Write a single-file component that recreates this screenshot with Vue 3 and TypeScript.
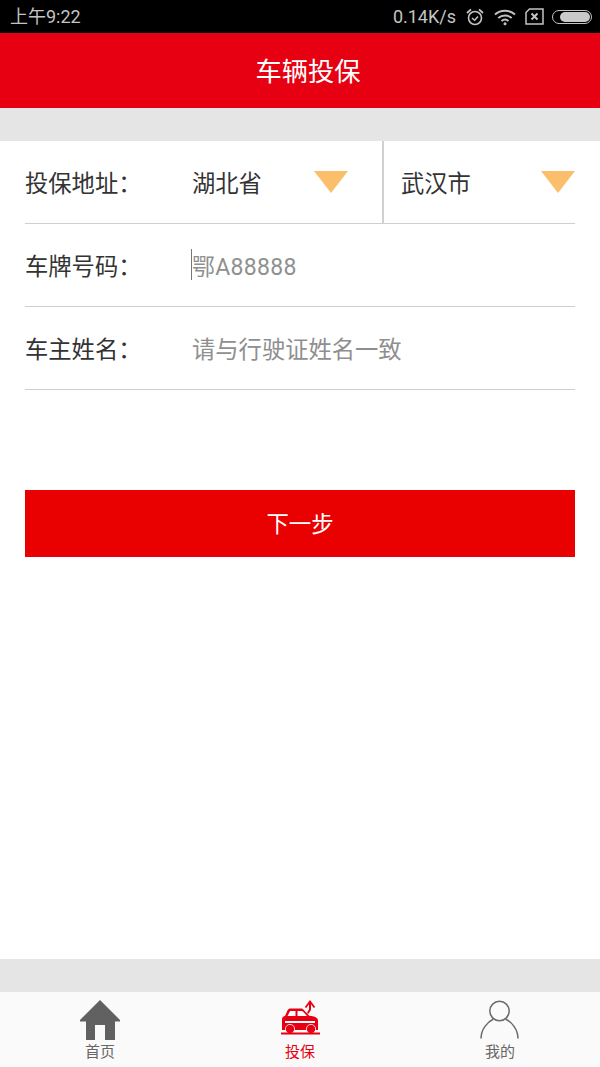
<script setup lang="ts">
const title: string = '车辆投保'
const nextLabel: string = '下一步'
</script>

<template>
  <div class="page">
    <div class="status">
      <span class="time">上午9:22</span>
      <div class="status-right">
        <span class="speed">0.14K/s</span>
        <svg class="s-icon" width="20" height="20" viewBox="0 0 20 20" fill="none" stroke="#c4c4c4">
          <circle cx="10" cy="11" r="6.5" stroke-width="1.6" />
          <path d="M7 11l2.6 2.2L13 9.4" stroke-width="1.5" />
          <path d="M2 6l4-3.6M18 6l-4-3.6" stroke-width="1.8" />
        </svg>
        <svg class="s-icon" width="22" height="18" viewBox="0 0 22 18" fill="none" stroke="#c4c4c4" stroke-width="2">
          <path d="M1 6.500c5.600-5 14.400-5 20 0" />
          <path d="M4.300 10c3.800-3.300 9.600-3.300 13.400 0" />
          <path d="M7.500 13c2-1.700 5-1.700 7 0" />
          <circle cx="11" cy="15.800" r="1.500" fill="#c4c4c4" stroke="none" />
        </svg>
        <svg class="s-icon" width="19" height="17" viewBox="0 0 19 17" fill="none" stroke="#c4c4c4">
          <path d="M4.500 1H18v15H1V4.500z" stroke-width="1.500" />
          <path d="M6.500 5.500l6 6M12.500 5.500l-6 6" stroke-width="2" />
        </svg>
        <div class="battery"><div class="battery-fill"></div></div>
      </div>
    </div>

    <header class="title-bar">{{ title }}</header>
    <div class="band"></div>

    <section class="form">
      <div class="row row-address">
        <span class="label">投保地址：</span>
        <div class="picker province">
          <span class="value">湖北省</span>
          <i class="arrow"></i>
        </div>
        <div class="picker city">
          <span class="value">武汉市</span>
          <i class="arrow"></i>
        </div>
      </div>
      <div class="row">
        <span class="label">车牌号码：</span>
        <span class="caret"></span>
        <span class="placeholder plate">鄂A88888</span>
      </div>
      <div class="row">
        <span class="label">车主姓名：</span>
        <span class="placeholder">请与行驶证姓名一致</span>
      </div>
    </section>

    <button class="next" type="button">{{ nextLabel }}</button>

    <div class="spacer"></div>
    <div class="band"></div>

    <nav class="tabs">
      <div class="tab">
        <svg width="42" height="40" viewBox="0 0 42 40">
          <path fill="#616161" d="M21 0L41 20v1.500H36V40H26V25H16V40H7V21.500H1V20z" />
        </svg>
        <span>首页</span>
      </div>
      <div class="tab active">
        <svg width="42" height="40" viewBox="0 0 42 40" fill="none" stroke="#e60012">
          <path d="M29 13.500c0-2 2-2.500 2-4.500V3" stroke-width="2" />
          <path d="M26.500 7.500L31 1.500l4.500 6" stroke-width="1.800" />
          <path fill="#e60012" stroke="none" d="M3 19.500c0-2 1-3.200 3-3.600l2.600-5.700c.6-1.200 1.500-1.700 2.900-1.700h10c1.400 0 2.400.4 3.300 1.400l5.400 5.900c5 .5 8.800 1.500 8.800 4.700v9.500H3z" />
          <path fill="#fff" stroke="none" d="M8.500 16l2.600-5h5.400v5zM18.500 11h4c.7 0 1.200.2 1.700.7l3.800 4.300h-9.500z" />
          <path fill="#fff" stroke="none" d="M6 21h30v2H6z" />
          <circle cx="11" cy="29" r="4.600" fill="#e60012" stroke="#fff" stroke-width="0.800" />
          <circle cx="32" cy="29" r="4.600" fill="#e60012" stroke="#fff" stroke-width="0.800" />
          <path d="M2 33.500h39" stroke-width="1.800" />
        </svg>
        <span>投保</span>
      </div>
      <div class="tab">
        <svg width="42" height="40" viewBox="0 0 42 40" fill="none" stroke="#6b6b6b" stroke-width="1.500">
          <circle cx="20.500" cy="11" r="9.700" />
          <path d="M2 38.500c0-9.500 6.500-16.500 12.500-19.500M39 38.500c0-9.500-6.500-16.500-12.500-19.500" />
        </svg>
        <span>我的</span>
      </div>
    </nav>
  </div>
</template>

<style scoped>
.page {
  width: 600px;
  height: 1067px;
  display: flex;
  flex-direction: column;
  background: #fff;
  font-family: "Noto Sans CJK SC", "Noto Sans", sans-serif;
  overflow: hidden;
}
.status {
  height: 33px;
  flex: none;
  background: #000;
  color: #c4c4c4;
  display: flex;
  justify-content: space-between;
  align-items: center;
  padding: 0 8px 0 10px;
  font-size: 18px;
  box-sizing: border-box;
}
.time,
.speed {
  font-family: Roboto, "Noto Sans CJK SC", sans-serif;
  line-height: 1;
}
.status-right {
  display: flex;
  align-items: center;
}
.s-icon {
  margin-left: 9px;
}
.battery {
  margin-left: 8px;
  width: 40px;
  height: 14px;
  border: 1.5px solid #c4c4c4;
  border-radius: 8px;
  box-sizing: border-box;
  padding: 1px;
  display: flex;
  justify-content: flex-end;
}
.battery-fill {
  width: 30px;
  background: #c9c9c9;
  border-radius: 6px;
}
.title-bar {
  height: 75px;
  flex: none;
  background: #e60012;
  color: #fff;
  font-size: 26.3px;
  display: flex;
  align-items: center;
  justify-content: center;
  padding: 0 0 3px 16px;
  box-sizing: border-box;
}
.band {
  height: 33px;
  flex: none;
  background: #e5e5e5;
}
.form {
  flex: none;
  margin: 0 25px;
}
.row {
  height: 83px;
  box-sizing: border-box;
  padding-bottom: 1px;
  border-bottom: 1px solid #cfcfcf;
  display: flex;
  align-items: center;
  font-size: 23.3px;
  color: #333;
}
.label {
  width: 167px;
  flex: none;
}
.row-address {
  align-items: stretch;
  padding-bottom: 0;
}
.row-address .label {
  align-self: center;
  margin-bottom: 1px;
}
.value {
  margin-bottom: 1px;
}
.picker {
  display: flex;
  align-items: center;
  justify-content: space-between;
  box-sizing: border-box;
}
.province {
  width: 192px;
  padding-right: 34px;
  border-right: 2px solid #d0d0d0;
}
.city {
  flex: 1;
  padding-left: 17px;
}
.arrow {
  width: 0;
  height: 0;
  border-left: 17.5px solid transparent;
  border-right: 17.5px solid transparent;
  border-top: 22px solid #fbbe6b;
}
.placeholder {
  color: #8f8f8f;
}
.plate {
  font-family: Roboto, "Noto Sans CJK SC", sans-serif;
  font-size: 23px;
  letter-spacing: 0.3px;
}
.caret {
  width: 1px;
  height: 31px;
  background: #777;
  margin-left: -1px;
}
.next {
  flex: none;
  margin: 100px 25px 0;
  height: 67px;
  border: none;
  background: #e90000;
  color: #fff;
  font-family: inherit;
  font-size: 22.4px;
  padding: 0 0 4px;
}
.spacer {
  flex: 1;
}
.tabs {
  height: 75px;
  flex: none;
  background: #fafafa;
  display: flex;
}
.tab {
  flex: 1;
  display: flex;
  flex-direction: column;
  align-items: center;
  padding-top: 8px;
  box-sizing: border-box;
  color: #666;
  font-size: 15px;
  line-height: 20px;
}
.tab svg {
  flex: none;
  margin-bottom: 1px;
}
.tab.active {
  color: #e60012;
}
</style>
